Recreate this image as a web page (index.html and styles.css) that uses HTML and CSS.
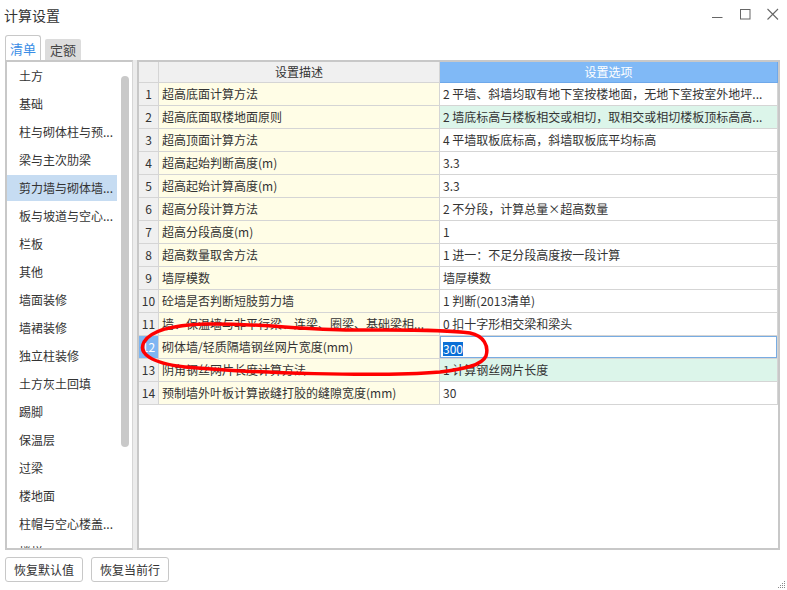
FILE: index.html
```html
<!DOCTYPE html>
<html lang="zh">
<head>
<meta charset="utf-8">
<title>计算设置</title>
<link rel="stylesheet" href="styles.css">
</head>
<body>
<div class="window">
  <div class="titlebar">
    <div class="title">计算设置</div>
    <svg class="controls" width="80" height="30" viewBox="0 0 80 30">
      <line x1="5" y1="17.5" x2="15.5" y2="17.5" stroke="#666" stroke-width="1"/>
      <rect x="33.5" y="9.5" width="9.5" height="9.5" fill="none" stroke="#666" stroke-width="1"/>
      <line x1="60.5" y1="9" x2="71" y2="19.5" stroke="#666" stroke-width="1.1"/>
      <line x1="71" y1="9" x2="60.5" y2="19.5" stroke="#666" stroke-width="1.1"/>
    </svg>
  </div>
  <div class="tabs">
    <div class="tab active">清单</div>
    <div class="tab inactive">定额</div>
  </div>
  <div class="main">
    <div class="left">
      <div class="list">
        <div class="item"><span>土方</span></div>
        <div class="item"><span>基础</span></div>
        <div class="item"><span>柱与砌体柱与预...</span></div>
        <div class="item"><span>梁与主次肋梁</span></div>
        <div class="item sel"><span>剪力墙与砌体墙...</span></div>
        <div class="item"><span>板与坡道与空心...</span></div>
        <div class="item"><span>栏板</span></div>
        <div class="item"><span>其他</span></div>
        <div class="item"><span>墙面装修</span></div>
        <div class="item"><span>墙裙装修</span></div>
        <div class="item"><span>独立柱装修</span></div>
        <div class="item"><span>土方灰土回填</span></div>
        <div class="item"><span>踢脚</span></div>
        <div class="item"><span>保温层</span></div>
        <div class="item"><span>过梁</span></div>
        <div class="item"><span>楼地面</span></div>
        <div class="item"><span>柱帽与空心楼盖...</span></div>
        <div class="item"><span>楼梯</span></div>
      </div>
      <div class="track"><div class="thumb"></div></div>
    </div>
    <div class="splitter"></div>
    <div class="grid">
      <div class="row head">
        <div class="n"></div>
        <div class="hd">设置描述</div>
        <div class="ho">设置选项</div>
      </div>
      <div class="row"><div class="n">1</div><div class="d">超高底面计算方法</div><div class="o">2 平墙、斜墙均取有地下室按楼地面，无地下室按室外地坪...</div></div>
      <div class="row"><div class="n">2</div><div class="d">超高底面取楼地面原则</div><div class="o g">2 墙底标高与楼板相交或相切，取相交或相切楼板顶标高高...</div></div>
      <div class="row"><div class="n">3</div><div class="d">超高顶面计算方法</div><div class="o">4 平墙取板底标高，斜墙取板底平均标高</div></div>
      <div class="row"><div class="n">4</div><div class="d">超高起始判断高度(m)</div><div class="o">3.3</div></div>
      <div class="row"><div class="n">5</div><div class="d">超高起始计算高度(m)</div><div class="o">3.3</div></div>
      <div class="row"><div class="n">6</div><div class="d">超高分段计算方法</div><div class="o">2 不分段，计算总量×超高数量</div></div>
      <div class="row"><div class="n">7</div><div class="d">超高分段高度(m)</div><div class="o">1</div></div>
      <div class="row"><div class="n">8</div><div class="d">超高数量取舍方法</div><div class="o">1 进一：不足分段高度按一段计算</div></div>
      <div class="row"><div class="n">9</div><div class="d">墙厚模数</div><div class="o">墙厚模数</div></div>
      <div class="row"><div class="n">10</div><div class="d">砼墙是否判断短肢剪力墙</div><div class="o">1 判断(2013清单)</div></div>
      <div class="row"><div class="n">11</div><div class="d">墙、保温墙与非平行梁、连梁、圈梁、基础梁相...</div><div class="o">0 扣十字形相交梁和梁头</div></div>
      <div class="row"><div class="n cur">12</div><div class="d">砌体墙/轻质隔墙钢丝网片宽度(mm)</div><div class="o edit"><span class="selected">300</span></div></div>
      <div class="row"><div class="n">13</div><div class="d">阴角钢丝网片长度计算方法</div><div class="o g">1 计算钢丝网片长度</div></div>
      <div class="row"><div class="n">14</div><div class="d">预制墙外叶板计算嵌缝打胶的缝隙宽度(mm)</div><div class="o">30</div></div>
    </div>
  </div>
  <div class="buttons">
    <button class="btn">恢复默认值</button>
    <button class="btn">恢复当前行</button>
  </div>
  <svg class="mark" width="787" height="590" viewBox="0 0 787 590">
    <path d="M 352 330 C 400 330, 440 329, 470 333 C 484 336, 489 346, 486 356 C 482 365, 465 369, 440 372 C 380 377, 250 373, 185 367 C 150 363, 138 353, 144 342 C 151 330, 172 325, 205 324 C 260 323, 300 330, 352 330 Z" fill="none" stroke="#f00" stroke-width="3.5" stroke-linejoin="round"/>
  </svg>
  <svg class="grip" width="8" height="8" viewBox="0 0 8 8">
    <rect x="6" y="0" width="1" height="1" fill="#888"/>
    <rect x="6" y="2" width="1" height="1" fill="#888"/>
    <rect x="4" y="2" width="1" height="1" fill="#888"/>
    <rect x="6" y="4" width="1" height="1" fill="#888"/>
    <rect x="4" y="4" width="1" height="1" fill="#888"/>
    <rect x="2" y="4" width="1" height="1" fill="#888"/>
    <rect x="6" y="6" width="1" height="1" fill="#888"/>
    <rect x="4" y="6" width="1" height="1" fill="#888"/>
    <rect x="2" y="6" width="1" height="1" fill="#888"/>
    <rect x="0" y="6" width="1" height="1" fill="#888"/>
  </svg>
</div>
</body>
</html>
```
FILE: styles.css
```css
* { box-sizing: border-box; margin: 0; padding: 0; }
html, body { width: 787px; height: 590px; overflow: hidden; background: #fff; }
body {
  font-family: "Noto Sans CJK SC", "Noto Sans", sans-serif;
  font-size: 12px;
  color: #333;
}
.window { position: relative; width: 787px; height: 590px; }

.titlebar {
  height: 30px;
  display: flex;
  align-items: center;
  justify-content: space-between;
  padding-left: 4px;
}
.title { font-size: 14px; line-height: 30px; color: #333; }
.controls { display: block; }

.tabs {
  display: flex;
  align-items: flex-end;
  height: 25px;
  margin-top: 5px;
  padding-left: 5px;
  gap: 4px;
}
.tab {
  width: 36px;
  font-size: 13px;
  display: flex;
  align-items: center;
  justify-content: center;
}
.tab.active {
  height: 25px;
  border: 1px solid #c8c8c8;
  border-bottom: none;
  border-radius: 3px 3px 0 0;
  color: #3a8de6;
  background: #fff;
}
.tab.inactive {
  height: 21px;
  background: #dcdcdc;
  border-radius: 2px 2px 0 0;
  color: #444;
}

.main {
  display: flex;
  height: 490px;
  margin: 0 7px 0 5px;
}
.left {
  width: 128px;
  border: 2px solid #c8c8c8;
  border-right: 1px solid #d6d6d6;
  display: flex;
  overflow: hidden;
}
.list { width: 110px; flex: none; }
.item { height: 28px; padding: 1px 0; }
.item span {
  display: block;
  height: 26px;
  line-height: 26px;
  padding-left: 12px;
  white-space: nowrap;
  overflow: hidden;
}
.item.sel span { background: #c6dcf2; }
.track { width: 15px; flex: none; padding: 14px 0 0 4px; }
.thumb { width: 8px; height: 371px; border-radius: 4px; background: #c9c9c9; }
.splitter { width: 4px; background: #ececec; }

.grid {
  flex: 1;
  border: 2px solid #c8c8c8;
  overflow: hidden;
}
.row {
  display: grid;
  grid-template-columns: 20px 281px 338px;
  height: 23px;
}
.row > div {
  border-right: 1px solid #d5d5d5;
  border-bottom: 1px solid #d5d5d5;
  line-height: 22px;
  padding-left: 3px;
  white-space: nowrap;
  overflow: hidden;
}
.row .n { text-align: center; padding: 0; background: #f0f0f0; }
.row .d { background: #fffde6; }
.row .o { background: #fff; }
.row .o.g { background: #dcf5ea; }
.row .n.cur { background: #7eb6f2; color: #fff; }
.row .o.edit { box-shadow: inset 0 0 0 1px #78ace2; }
.selected {
  display: inline-block;
  line-height: 14px;
  background: #0a6fd6;
  color: #fff;
  vertical-align: middle;
}
.head { height: 21px; }
.head > div { line-height: 20px; text-align: center; padding: 0; }
.head .hd { background: #f0f0f0; }
.head .ho { background: #80b9f6; color: #fff; border-color: #6ea8ea; }

.buttons {
  display: flex;
  gap: 8px;
  margin-top: 7px;
  padding-left: 5px;
}
.btn {
  height: 25px;
  padding: 0 8px;
  border: 1px solid #c8c8c8;
  border-radius: 3px;
  background: #fff;
  font-family: inherit;
  font-size: 12px;
  line-height: 23px;
  color: #333;
}

.mark { position: absolute; left: 0; top: 0; pointer-events: none; }
.grip { position: absolute; right: 1px; bottom: 1px; }
```
